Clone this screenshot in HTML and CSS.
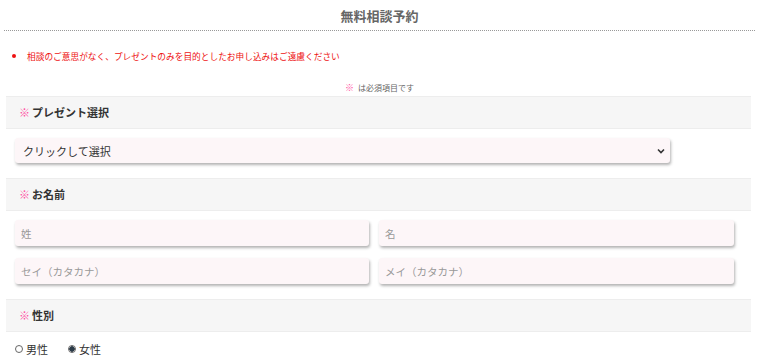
FILE: index.html
```html
<!DOCTYPE html>
<html lang="ja">
<head>
    <meta charset="UTF-8">
    <meta name="viewport" content="width=device-width, initial-scale=1.0">
    <title>無料相談予約</title>
    <link rel="stylesheet" href="styles.css">
</head>
<body>
<div class="page">
    <h1 class="title">無料相談予約</h1>
    <ul class="notice">
        <li>相談のご意思がなく、プレゼントのみを目的としたお申し込みはご遠慮ください</li>
    </ul>
    <p class="required-note"><span class="mark">※</span> は必須項目です</p>

    <form class="form">
        <div class="section-head"><span class="mark">※</span>プレゼント選択</div>
        <div class="section-body">
            <div class="select-wrap">
                <select class="field select">
                    <option>クリックして選択</option>
                </select>
                <svg class="chevron" width="8" height="6" viewBox="0 0 8 6">
                    <path d="M1 1.5 L4 4.5 L7 1.5" fill="none" stroke="#333" stroke-width="1.6"/>
                </svg>
            </div>
        </div>

        <div class="section-head"><span class="mark">※</span>お名前</div>
        <div class="section-body grid">
            <input class="field" type="text" placeholder="姓">
            <input class="field" type="text" placeholder="名">
            <input class="field" type="text" placeholder="セイ（カタカナ）">
            <input class="field" type="text" placeholder="メイ（カタカナ）">
        </div>

        <div class="section-head"><span class="mark">※</span>性別</div>
        <div class="section-body radios">
            <label class="radio"><input type="radio" name="sex"> 男性</label>
            <label class="radio"><input type="radio" name="sex" checked> 女性</label>
        </div>
    </form>
</div>
</body>
</html>
```

FILE: styles.css
```css
body {
    margin: 0;
    background-color: #fff;
    color: #333;
    font-family: "Noto Sans CJK JP", "Noto Sans", sans-serif;
}
.page {
    padding: 0 5px 0 4px;
}
.title {
    margin: 0;
    padding: 6px 0 4px;
    font-size: 13px;
    line-height: 20px;
    font-weight: bold;
    color: #666;
    text-align: center;
    border-bottom: 1px dotted #999;
}
.notice {
    margin: 16px 0 0;
    padding: 0 0 0 23px;
    color: #ee1111;
    font-size: 8.7px;
    line-height: 16px;
}
.notice li::marker {
    font-size: 11px;
}
.required-note {
    margin: 16px 0 0;
    font-size: 8px;
    line-height: 14px;
    color: #666;
    text-align: center;
}
.mark {
    color: #ff4fa3;
    font-weight: bold;
    margin-right: 2px;
}
.required-note .mark {
    font-size: 9px;
}
.form {
    margin: 1px 4px 0 2px;
}
.section-head {
    height: 31px;
    line-height: 31px;
    padding-left: 13px;
    background-color: #f6f6f6;
    border-top: 1px solid #ededed;
    border-bottom: 1px solid #ededed;
    font-size: 11px;
    font-weight: bold;
    color: #333;
}
.section-body {
    display: flex;
    padding: 9px 0 15px 9px;
}
.field {
    box-sizing: border-box;
    height: 26px;
    padding: 0 7px;
    border: none;
    border-radius: 3px;
    background-color: #fdf6f8;
    box-shadow: 1px 2px 3px rgba(0, 0, 0, 0.3);
    font-family: inherit;
    font-size: 11px;
    color: #333;
    outline: none;
}
.field::placeholder {
    color: #999;
    font-size: 10.5px;
}
.select-wrap {
    position: relative;
}
.select {
    appearance: none;
    display: block;
    width: 655px;
    height: 25px;
    padding-left: 8px;
}
.chevron {
    position: absolute;
    right: 5px;
    top: 10px;
    pointer-events: none;
}
.grid {
    display: grid;
    grid-template-columns: 354px 355px;
    column-gap: 10px;
    row-gap: 12px;
}
.grid .field {
    width: 100%;
    padding-left: 6px;
}
.radios {
    gap: 20px;
    padding-top: 9px;
    font-size: 11px;
    line-height: 16px;
}
.radio {
    display: flex;
    align-items: center;
    gap: 3px;
}
.radio input {
    appearance: none;
    margin: 0;
    width: 8px;
    height: 8px;
    border: 1px solid #666;
    border-radius: 50%;
    background-color: #fff;
}
.radio input:checked {
    background: radial-gradient(circle, #2b3a48 0 2.5px, #fff 3px);
}
```
